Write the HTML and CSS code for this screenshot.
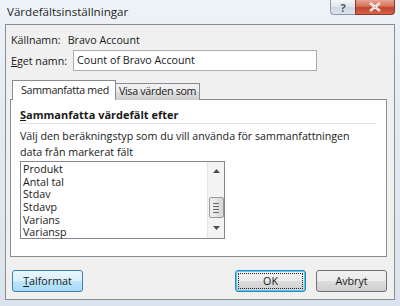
FILE: index.html
```html
<!DOCTYPE html>
<html lang="sv">
<head>
<meta charset="utf-8">
<title>Värdefältsinställningar</title>
<link rel="stylesheet" href="styles.css">
</head>
<body>
<div class="window">
  <div class="titlebar">
    <span class="title">Värdefältsinställningar</span>
    <div class="caption">
      <span class="cap help">?</span>
      <span class="cap close">
        <svg width="14" height="10" viewBox="0 0 14 10"><path d="M2 1 L12 9 M12 1 L2 9" stroke="#fff" stroke-width="2.4" fill="none"/><path d="M2 1 L12 9 M12 1 L2 9" stroke="#7a2a20" stroke-width="0.6" fill="none" opacity="0.5"/></svg>
      </span>
    </div>
  </div>
  <div class="client">
    <div class="row source">
      <span class="lbl">Källnamn:</span>
      <span>Bravo Account</span>
    </div>
    <div class="row name">
      <span class="lbl"><u>E</u>get namn:</span>
      <div class="input">Count of Bravo Account</div>
    </div>
    <div class="tabs">
      <div class="tab active">Sammanfatta med</div>
      <div class="tab">Visa värden som</div>
    </div>
    <div class="panel">
      <div class="heading"><u>S</u>ammanfatta värdefält efter</div>
      <p class="desc">Välj den beräkningstyp som du vill använda för sammanfattningen<br>data från markerat fält</p>
      <div class="list">
        <ul class="items">
          <li>Produkt</li>
          <li>Antal tal</li>
          <li>Stdav</li>
          <li>Stdavp</li>
          <li>Varians</li>
          <li>Variansp</li>
        </ul>
        <div class="scrollbar">
          <svg class="arrow" width="7" height="4" viewBox="0 0 7 4"><path d="M0 4 L3.5 0 L7 4 Z" fill="#4d4d4d"/></svg>
          <div class="thumb">
            <span></span><span></span><span></span><span></span>
          </div>
          <svg class="arrow" width="7" height="4" viewBox="0 0 7 4"><path d="M0 0 L3.5 4 L7 0 Z" fill="#4d4d4d"/></svg>
        </div>
      </div>
    </div>
    <div class="buttons">
      <button class="btn hot"><u>T</u>alformat</button>
      <div class="right">
        <button class="btn default"><span class="focus">OK</span></button>
        <button class="btn">Avbryt</button>
      </div>
    </div>
  </div>
</div>
</body>
</html>
```

FILE: styles.css
```css
* { box-sizing: border-box; }
html, body { margin: 0; padding: 0; }
body {
  width: 400px;
  height: 306px;
  overflow: hidden;
  font-family: "Open Sans", "Noto Sans", sans-serif;
  font-size: 10.7px;
  color: #1a1a1a;
  white-space: nowrap;
}
.window {
  width: 400px;
  height: 306px;
  background: linear-gradient(180deg, #eef3f8 0%, #e3eaf2 40%, #dbe4ee 100%);
  display: flex;
  flex-direction: column;
  padding: 0 5px 6px 5px;
}
.titlebar {
  height: 24px;
  display: flex;
  justify-content: space-between;
  align-items: flex-start;
  flex: none;
}
.title {
  margin-top: 4px;
  margin-left: 2px;
  font-size: 11.6px;
  color: #1e1e1e;
}
.caption { display: flex; }
.cap {
  height: 15px;
  display: flex;
  align-items: center;
  justify-content: center;
}
.help {
  width: 25px;
  border: 1px solid #8f99a6;
  border-top: none;
  border-right: none;
  border-radius: 0 0 0 4px;
  background: linear-gradient(180deg, #f4f6f9 0%, #dfe5ec 50%, #cfd8e3 51%, #dbe3ec 100%);
  color: #4a5a6c;
  font-size: 11px;
  font-weight: bold;
  line-height: 1;
}
.close {
  width: 40px;
  border: 1px solid #8a3b2e;
  border-top: none;
  border-radius: 0 0 4px 0;
  background: linear-gradient(180deg, #e8a593 0%, #d6715a 45%, #c2432b 55%, #d7634b 100%);
}
.client {
  flex: 1;
  background: #f0f0f0;
  border: 1px solid #8c8e91;
  display: flex;
  flex-direction: column;
  padding: 7px 7px 0 4px;
}
.row {
  display: flex;
  align-items: center;
  padding-left: 1px;
}
.source { height: 15px; }
.source .lbl { margin-right: 7px; }
.name { margin-top: 3px; height: 21px; }
.name .lbl { margin-right: 6px; }
.input {
  width: 244px;
  height: 21px;
  border: 1px solid #abadb3;
  background: #fff;
  padding: 1px 3px;
  line-height: 17px;
}
.tabs {
  display: flex;
  align-items: flex-end;
  margin-top: 9px;
  height: 20px;
  position: relative;
  z-index: 1;
  letter-spacing: -0.3px;
}
.tab {
  height: 17px;
  border: 1px solid #898c95;
  border-bottom: none;
  border-left: none;
  background: linear-gradient(180deg, #f2f2f2 0%, #ebebeb 50%, #dddddd 51%, #cfcfcf 100%);
  padding: 0 3px 0 3px;
  line-height: 15px;
}
.tab.active {
  height: 20px;
  border-left: 1px solid #898c95;
  background: #fff;
  padding: 0 6px 0 8px;
  line-height: 18px;
  margin-left: 2px;
  position: relative;
  z-index: 2;
}
.panel {
  margin-top: -1px;
  height: 158px;
  background: #fff;
  border: 1px solid #898c95;
  padding: 7px 10px 0 9px;
}
.heading {
  font-weight: bold;
  font-size: 11px;
  height: 17px;
  line-height: 15px;
  border-bottom: 1px solid #e2e2e2;
}
.desc {
  margin: 4px 0 0 0;
  line-height: 16px;
}
.list {
  margin-top: 1px;
  width: 205px;
  height: 78px;
  border: 1px solid #828790;
  display: flex;
}
.items {
  list-style: none;
  margin: 0;
  padding: 1px 0 0 2px;
  flex: 1;
}
.items li {
  height: 12.7px;
  line-height: 12.7px;
}
.scrollbar {
  width: 17px;
  background: #f3f3f3;
  border-left: 1px solid #e6e6e6;
  display: flex;
  flex-direction: column;
  align-items: center;
  padding-top: 7px;
}
.arrow { flex: none; }
.thumb {
  margin-top: 24px;
  width: 15px;
  height: 21px;
  border: 1px solid #9a9a9a;
  border-radius: 2px;
  background: linear-gradient(90deg, #f2f2f2 0%, #e2e2e2 50%, #d6d6d6 100%);
  display: flex;
  flex-direction: column;
  align-items: center;
  justify-content: center;
  gap: 2px;
}
.thumb span {
  width: 6px;
  height: 1px;
  background: #6b6b6b;
}
.thumb + .arrow { margin-top: 8px; }
.buttons {
  margin-top: 13px;
  display: flex;
  justify-content: space-between;
  padding-left: 2px;
}
.right { display: flex; gap: 10px; }
.btn {
  font-family: inherit;
  font-size: 10.7px;
  color: #1a1a1a;
  width: 71px;
  height: 22px;
  border: 1px solid #707070;
  border-radius: 3px;
  background: linear-gradient(180deg, #f2f2f2 0%, #ebebeb 50%, #dddddd 51%, #cfcfcf 100%);
  padding: 0;
  display: flex;
  align-items: center;
  justify-content: center;
}
.btn.hot {
  border-color: #3c7fb1;
  background: linear-gradient(180deg, #eaf6fd 0%, #d9f0fc 50%, #bee6fd 51%, #a7d9f5 100%);
}
.btn.default {
  border-color: #3c7fb1;
  box-shadow: inset 0 0 0 1px #48d0f8;
  padding: 2px;
}
.focus {
  flex: 1;
  align-self: stretch;
  border: 1px dotted #222;
  display: flex;
  align-items: center;
  justify-content: center;
}
```
